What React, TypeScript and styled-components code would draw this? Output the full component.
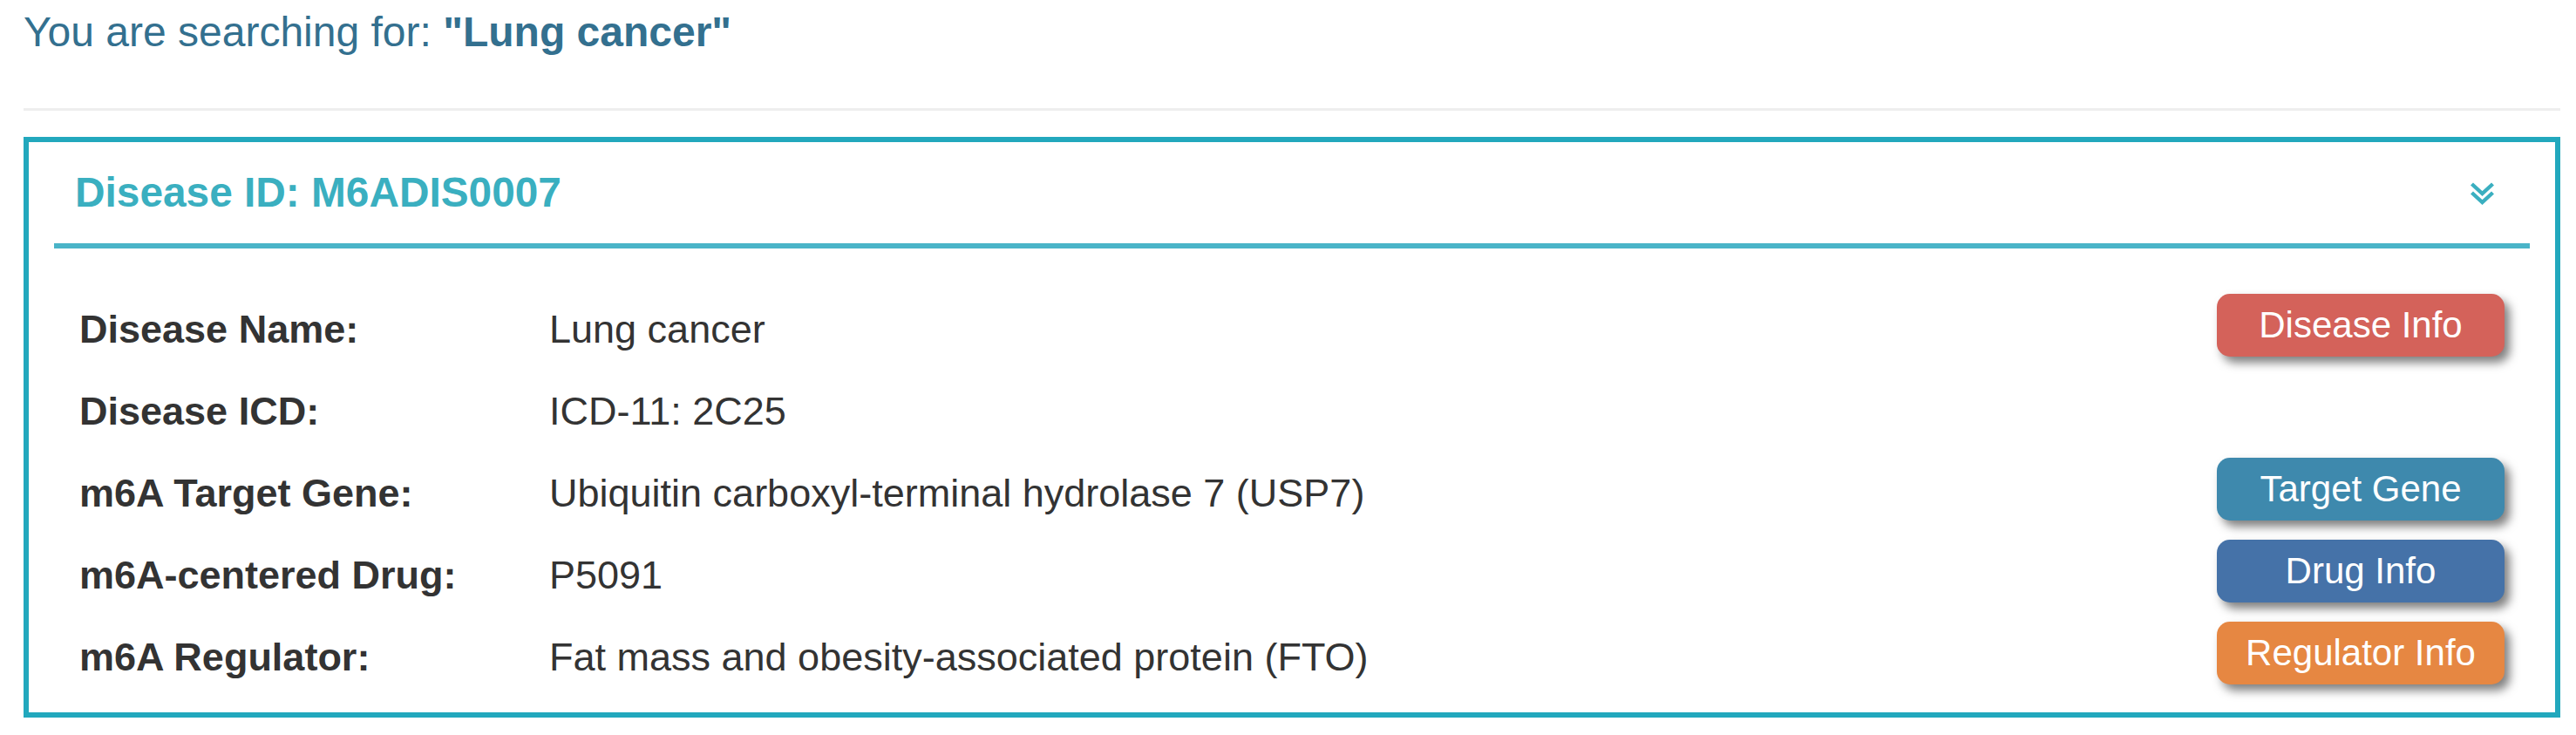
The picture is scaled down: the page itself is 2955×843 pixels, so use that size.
import React from "react";
import styled, { createGlobalStyle } from "styled-components";

const GlobalStyle = createGlobalStyle`
  html, body {
    margin: 0;
    padding: 0;
    background: #ffffff;
  }
  body {
    font-family: "Liberation Sans", Arial, Helvetica, sans-serif;
  }
`;

const Page = styled.div`
  padding: 10px 18px 0 27px;
  box-sizing: border-box;
  width: 2955px;
`;

const SearchTitle = styled.h3`
  margin: 0;
  font-size: 48px;
  line-height: 54px;
  font-weight: normal;
  color: #33708f;
  white-space: nowrap;

  strong {
    font-weight: bold;
  }
`;

const Divider = styled.hr`
  margin: 60px 0 0 0;
  height: 3px;
  border: 0;
  background: #eeeeee;
`;

const Panel = styled.section`
  margin-top: 30px;
  border: 6px solid #22a8bd;
  box-sizing: border-box;
`;

const PanelHeading = styled.div`
  margin: 0 29px;
  height: 122px;
  box-sizing: border-box;
  border-bottom: 6px solid #4ab4c8;
  padding: 0 40px 0 24px;
  display: flex;
  align-items: center;
  justify-content: space-between;
`;

const HeadingTitle = styled.h4`
  margin: 0;
  font-size: 47.8px;
  line-height: 54px;
  font-weight: bold;
  color: #3aafc0;
`;

const ToggleIcon = styled.svg`
  width: 29px;
  height: 28px;
  display: block;
  margin-top: 2px;
`;

const PanelBody = styled.div`
  padding: 46px 58px 16px 58px;
  display: flex;
  flex-direction: column;
`;

const Row = styled.div`
  display: grid;
  grid-template-columns: 539px 1fr 330px;
  align-items: center;
  height: 94px;
`;

const Label = styled.div`
  font-size: 45px;
  font-weight: bold;
  color: #333333;
  white-space: nowrap;
`;

const Value = styled.div`
  font-size: 45px;
  color: #333333;
  white-space: nowrap;
`;

const ActionButton = styled.button<{ $bg: string }>`
  width: 330px;
  height: 72px;
  margin-bottom: 11px;
  border: 0;
  border-radius: 15px;
  background: ${(p) => p.$bg};
  color: #ffffff;
  font-family: "Liberation Sans", Arial, Helvetica, sans-serif;
  font-size: 42px;
  padding: 0;
  box-shadow: 6px 7px 11px rgba(0, 0, 0, 0.5);
  cursor: pointer;
`;

type RowData = {
  label: string;
  value: string;
  button?: { text: string; color: string };
};

const rows: RowData[] = [
  { label: "Disease Name:", value: "Lung cancer", button: { text: "Disease Info", color: "#d4625a" } },
  { label: "Disease ICD:", value: "ICD-11: 2C25" },
  {
    label: "m6A Target Gene:",
    value: "Ubiquitin carboxyl-terminal hydrolase 7 (USP7)",
    button: { text: "Target Gene", color: "#3e89ad" },
  },
  { label: "m6A-centered Drug:", value: "P5091", button: { text: "Drug Info", color: "#4572a8" } },
  {
    label: "m6A Regulator:",
    value: "Fat mass and obesity-associated protein (FTO)",
    button: { text: "Regulator Info", color: "#e68742" },
  },
];

export default function App() {
  return (
    <>
      <GlobalStyle />
      <Page>
        <SearchTitle>
          You are searching for: <strong>"Lung cancer"</strong>
        </SearchTitle>
        <Divider />
        <Panel>
          <PanelHeading>
            <HeadingTitle>Disease ID: M6ADIS0007</HeadingTitle>
            <ToggleIcon viewBox="0 0 29 28" fill="none" stroke="#3aafc0" strokeWidth="4.4" strokeLinecap="butt" strokeLinejoin="miter">
              <polyline points="2.5,3 14.5,14 26.5,3" />
              <polyline points="2.5,13 14.5,24 26.5,13" />
            </ToggleIcon>
          </PanelHeading>
          <PanelBody>
            {rows.map((r) => (
              <Row key={r.label}>
                <Label>{r.label}</Label>
                <Value>{r.value}</Value>
                {r.button ? <ActionButton $bg={r.button.color}>{r.button.text}</ActionButton> : <span />}
              </Row>
            ))}
          </PanelBody>
        </Panel>
      </Page>
    </>
  );
}
